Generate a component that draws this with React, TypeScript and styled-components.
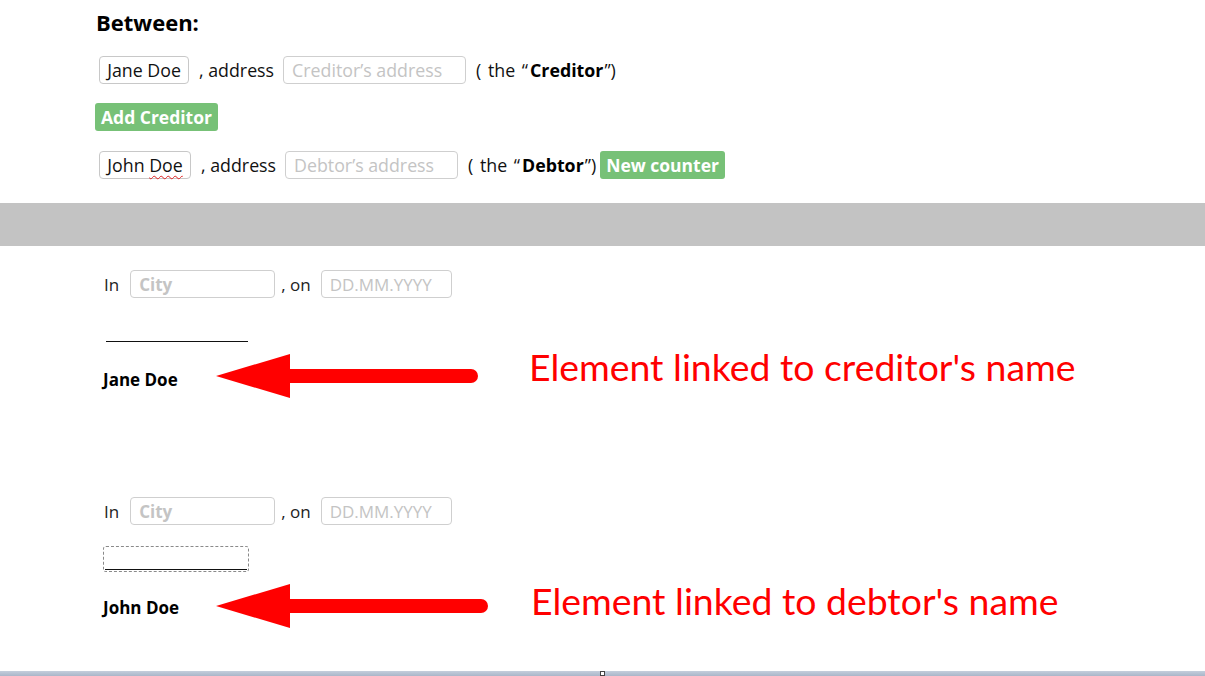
import React from 'react'
import styled, { createGlobalStyle } from 'styled-components'

const GlobalStyle = createGlobalStyle`
  html, body {
    margin: 0;
    padding: 0;
    background: #ffffff;
  }
  body {
    font-family: 'Open Sans', 'Noto Sans', sans-serif;
    color: #111;
    overflow: hidden;
  }
`

const Page = styled.div`
  width: 1205px;
  height: 676px;
  display: flex;
  flex-direction: column;
  background: #fff;
`

const Parties = styled.section`
  display: flex;
  flex-direction: column;
  padding: 7px 0 0 95px;
  height: 203px;
  box-sizing: border-box;
  flex-shrink: 0;
`

const Heading = styled.h2`
  margin: 0 0 0 1px;
  font-size: 22px;
  font-weight: 700;
  line-height: 30px;
  color: #000;
`

const Row = styled.div<{ $top: number }>`
  display: flex;
  align-items: center;
  height: 28px;
  margin-top: ${({ $top }) => $top}px;
  font-size: 17.8px;
  white-space: nowrap;
`

const NameBox = styled.span<{ $width: number }>`
  box-sizing: border-box;
  display: inline-flex;
  align-items: center;
  justify-content: center;
  width: ${({ $width }) => $width}px;
  height: 28px;
  margin: 0 10px 0 4px;
  border: 1px solid #c8c8c8;
  border-radius: 4px;
  color: #111;
`

const Squiggle = styled.span`
  text-decoration: underline wavy #e02020;
  text-decoration-thickness: 1px;
  text-underline-offset: 3px;
`

const Field = styled.span<{ $width: number; $bold?: boolean }>`
  box-sizing: border-box;
  display: inline-flex;
  align-items: center;
  width: ${({ $width }) => $width}px;
  height: 28px;
  padding: 0 8px;
  margin: 0 10px 0 9px;
  border: 1px solid #cfcfcf;
  border-radius: 4px;
  color: #c4c4c4;
  font-weight: ${({ $bold }) => ($bold ? 700 : 400)};
`

const Paren = styled.span`
  word-spacing: 2px;
`

const Strong = styled.b`
  font-weight: 700;
  color: #000;
  margin: 0 1px 0 2px;
`

const GreenButton = styled.button<{ $gap?: number }>`
  height: 28px;
  padding: 0 6px;
  margin-left: ${({ $gap }) => $gap ?? 0}px;
  border: none;
  border-radius: 3px;
  background: #77c177;
  color: #fff;
  font-family: inherit;
  font-size: 17.5px;
  font-weight: 700;
  cursor: pointer;
`

const ButtonRow = styled.div`
  margin-top: 19px;
  display: flex;
`

const Band = styled.div`
  height: 43px;
  background: #c3c3c3;
  flex-shrink: 0;
`

const Signature = styled.section<{ $height: number }>`
  display: flex;
  flex-direction: column;
  padding: 24px 0 0 104px;
  height: ${({ $height }) => $height}px;
  box-sizing: border-box;
  flex-shrink: 0;
`

const PlaceRow = styled.div`
  display: flex;
  align-items: center;
  height: 28px;
  font-size: 17px;
  color: #222;
`

const InLabel = styled.span`
  margin-right: 11px;
`

const SmallField = styled(Field)`
  margin: 0;
`

const Comma = styled.span`
  margin: 0 10px 0 6px;
`

const SignLine = styled.div<{ $dashed?: boolean; $top: number }>`
  box-sizing: border-box;
  width: 146px;
  height: 26px;
  margin-top: ${({ $top }) => $top}px;
  margin-left: ${({ $dashed }) => ($dashed ? -1 : 0)}px;
  border: 1px ${({ $dashed }) => ($dashed ? 'dashed #8a8a8a' : 'solid transparent')};
  border-radius: 3px;
  display: flex;
  align-items: flex-end;
  padding: 0 1px 1px;

  &::after {
    content: '';
    flex: 1;
    height: 1px;
    background: #111;
  }
`

const NameRow = styled.div<{ $top: number }>`
  display: flex;
  align-items: flex-start;
  margin-top: ${({ $top }) => $top}px;
  height: 46px;
`

const SignerName = styled.span<{ $shift: number }>`
  width: 113px;
  flex-shrink: 0;
  margin: ${({ $shift }) => $shift}px 0 0 -1px;
  font-size: 17px;
  font-weight: 700;
  line-height: 22px;
  color: #000;
`

const Arrow = styled.svg`
  display: block;
  flex-shrink: 0;
`

const Note = styled.span<{ $gap: number; $shift: number }>`
  margin: ${({ $shift, $gap }) => `${$shift}px 0 0 ${$gap}px`};
  font-family: Lato, 'Open Sans', sans-serif;
  font-size: 37.4px;
  line-height: 44px;
  color: #ff0000;
  white-space: nowrap;
`

const StatusBar = styled.div`
  margin-top: auto;
  height: 5px;
  background: linear-gradient(#c4cedc, #a9b6c9);
  display: flex;
  justify-content: center;
`

const Grip = styled.span`
  width: 5px;
  height: 5px;
  border: 1px solid #444;
  background: #fff;
  box-sizing: border-box;
`

function RedArrow({ length }: { length: number }): JSX.Element {
  const end = length - 8
  return (
    <Arrow width={length} height={46} viewBox={`0 0 ${length} 46`}>
      <path d="M0 23 L74 1 L74 45 Z" fill="#ff0000" />
      <line
        x1={70}
        y1={23}
        x2={end}
        y2={23}
        stroke="#ff0000"
        strokeWidth={14}
        strokeLinecap="round"
      />
    </Arrow>
  )
}

type TSigner = {
  name: string
  note: string
  dashed?: boolean
  lineTop: number
  rowTop: number
  arrowLength: number
  noteGap: number
  nameShift: number
  noteShift: number
  height: number
}

function SignatureBlock({ signer }: { signer: TSigner }): JSX.Element {
  return (
    <Signature $height={signer.height}>
      <PlaceRow>
        <InLabel>In</InLabel>
        <SmallField $width={145} $bold>
          City
        </SmallField>
        <Comma>, on</Comma>
        <SmallField $width={131}>DD.MM.YYYY</SmallField>
      </PlaceRow>
      <SignLine $dashed={signer.dashed} $top={signer.lineTop} />
      <NameRow $top={signer.rowTop}>
        <SignerName $shift={signer.nameShift}>{signer.name}</SignerName>
        <RedArrow length={signer.arrowLength} />
        <Note $gap={signer.noteGap} $shift={signer.noteShift}>
          {signer.note}
        </Note>
      </NameRow>
    </Signature>
  )
}

const signers: TSigner[] = [
  {
    name: 'Jane Doe',
    note: "Element linked to creditor's name",
    lineTop: 20,
    rowTop: 9,
    arrowLength: 263,
    noteGap: 50,
    nameShift: 16,
    noteShift: -8,
    height: 227,
  },
  {
    name: 'John Doe',
    note: "Element linked to debtor's name",
    dashed: true,
    lineTop: 21,
    rowTop: 11,
    arrowLength: 273,
    noteGap: 42,
    nameShift: 14,
    noteShift: -4,
    height: 170,
  },
]

function App(): JSX.Element {
  return (
    <Page>
      <GlobalStyle />
      <Parties>
        <Heading>Between:</Heading>
        <Row $top={19}>
          <NameBox $width={90}>Jane Doe</NameBox>
          <span>, address</span>
          <Field $width={183}>Creditor’s address</Field>
          <Paren>
            ( the “<Strong>Creditor</Strong>”)
          </Paren>
        </Row>
        <ButtonRow>
          <GreenButton type="button">Add Creditor</GreenButton>
        </ButtonRow>
        <Row $top={20}>
          <NameBox $width={92}>
            <span>
              John <Squiggle>Doe</Squiggle>
            </span>
          </NameBox>
          <span>, address</span>
          <Field $width={173}>Debtor’s address</Field>
          <Paren>
            ( the “<Strong>Debtor</Strong>”)
          </Paren>
          <GreenButton type="button" $gap={4}>
            New counter
          </GreenButton>
        </Row>
      </Parties>
      <Band />
      {signers.map((signer) => (
        <SignatureBlock key={signer.name} signer={signer} />
      ))}
      <StatusBar>
        <Grip />
      </StatusBar>
    </Page>
  )
}

export default App
